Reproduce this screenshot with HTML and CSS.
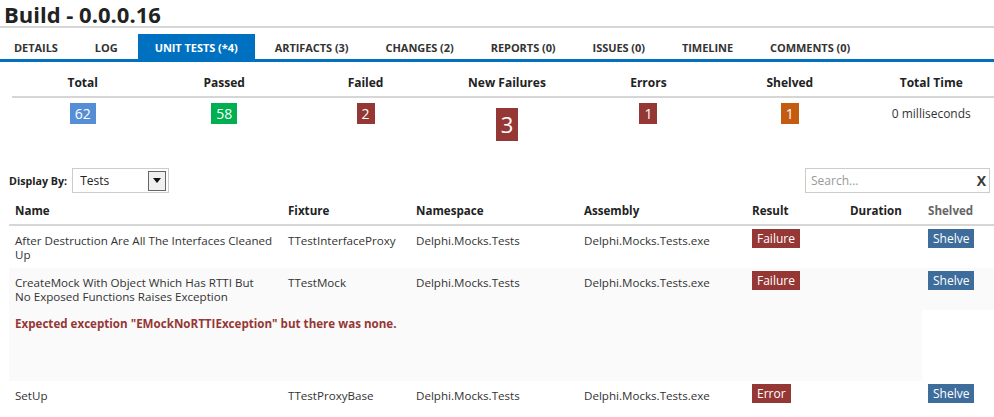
FILE: index.html
```html
<!DOCTYPE html>
<html lang="en">
<head>
    <meta charset="UTF-8">
    <title>Build - 0.0.0.16</title>
    <link rel="stylesheet" href="styles.css">
</head>
<body>
    <h1 class="build-title">Build - 0.0.0.16</h1>

    <ul class="tabs">
        <li>Details</li>
        <li>Log</li>
        <li class="active">Unit Tests (*4)</li>
        <li>Artifacts (3)</li>
        <li>Changes (2)</li>
        <li>Reports (0)</li>
        <li>Issues (0)</li>
        <li>Timeline</li>
        <li>Comments (0)</li>
    </ul>

    <table class="summary">
        <thead>
            <tr>
                <th>Total</th>
                <th>Passed</th>
                <th>Failed</th>
                <th>New Failures</th>
                <th>Errors</th>
                <th>Shelved</th>
                <th>Total Time</th>
            </tr>
        </thead>
        <tbody>
            <tr>
                <td><span class="count count-total">62</span></td>
                <td><span class="count count-passed">58</span></td>
                <td><span class="count count-failed">2</span></td>
                <td><span class="count count-new">3</span></td>
                <td><span class="count count-failed">1</span></td>
                <td><span class="count count-shelved">1</span></td>
                <td class="total-time">0 milliseconds</td>
            </tr>
        </tbody>
    </table>

    <div class="toolbar">
        <div class="display-by">
            <label>Display By:</label>
            <div class="select">
                <span>Tests</span>
                <span class="select-btn">
                    <svg width="8" height="5" viewBox="0 0 8 5"><path d="M0 0h8L4 5z" fill="#111"/></svg>
                </span>
            </div>
        </div>
        <div class="search">
            <span class="placeholder">Search...</span>
            <span class="clear">X</span>
        </div>
    </div>

    <table class="tests">
        <thead>
            <tr>
                <th class="col-name">Name</th>
                <th class="col-fixture">Fixture</th>
                <th class="col-ns">Namespace</th>
                <th class="col-asm">Assembly</th>
                <th class="col-result">Result</th>
                <th class="col-duration">Duration</th>
                <th class="col-shelved">Shelved</th>
            </tr>
        </thead>
        <tbody>
            <tr>
                <td>After Destruction Are All The Interfaces Cleaned Up</td>
                <td>TTestInterfaceProxy</td>
                <td>Delphi.Mocks.Tests</td>
                <td>Delphi.Mocks.Tests.exe</td>
                <td class="badge-cell"><span class="badge badge-failure">Failure</span></td>
                <td></td>
                <td class="badge-cell"><span class="badge badge-shelve">Shelve</span></td>
            </tr>
            <tr class="alt">
                <td>CreateMock With Object Which Has RTTI But<br>No Exposed Functions Raises Exception</td>
                <td>TTestMock</td>
                <td>Delphi.Mocks.Tests</td>
                <td>Delphi.Mocks.Tests.exe</td>
                <td class="badge-cell"><span class="badge badge-failure">Failure</span></td>
                <td></td>
                <td class="badge-cell"><span class="badge badge-shelve">Shelve</span></td>
            </tr>
            <tr class="message-row">
                <td colspan="6" class="message">Expected exception "EMockNoRTTIException" but there was none.</td>
                <td class="message-gap"></td>
            </tr>
            <tr>
                <td>SetUp</td>
                <td>TTestProxyBase</td>
                <td>Delphi.Mocks.Tests</td>
                <td>Delphi.Mocks.Tests.exe</td>
                <td class="badge-cell"><span class="badge badge-failure">Error</span></td>
                <td></td>
                <td class="badge-cell"><span class="badge badge-shelve">Shelve</span></td>
            </tr>
        </tbody>
    </table>
</body>
</html>
```

FILE: styles.css
```css
body {
    margin: 0;
    font-family: "Open Sans", "Noto Sans", Arial, sans-serif;
    font-size: 11.6px;
    color: #333;
    background-color: white;
    overflow: hidden;
}
.build-title {
    margin: 0;
    padding: 2px 0 0 4px;
    font-size: 22px;
    line-height: 24px;
    font-weight: bold;
    color: #222;
    border-bottom: 2px solid #d6d6d6;
}
.tabs {
    list-style: none;
    margin: 6px 0 0 0;
    padding: 0;
    display: flex;
    border-bottom: 3px solid #0070c0;
}
.tabs li {
    padding: 0 17px;
    margin-right: 3px;
    height: 25px;
    line-height: 27px;
    font-size: 11px;
    letter-spacing: -0.05px;
    font-weight: bold;
    text-transform: uppercase;
    color: #333;
}
.tabs li:first-child {
    padding-left: 14px;
}
.tabs li.active {
    background-color: #0070c0;
    color: white;
}

/* summary counts */
.summary {
    margin: 8px 0 0 12px;
    width: 990px;
    border-collapse: collapse;
    table-layout: fixed;
}
.summary th {
    font-size: 12px;
    font-weight: bold;
    color: #222;
    height: 24px;
    padding: 0 0 2px 0;
    border-bottom: 2px solid #d6d6d6;
}
.summary td {
    text-align: center;
    vertical-align: top;
    padding: 5px 0 0 0;
    height: 45px;
}
.count {
    display: inline-block;
    min-width: 7px;
    padding: 0 5px;
    height: 21px;
    line-height: 21px;
    font-size: 14px;
    color: white;
}
.count-total { background-color: #558ed5; }
.count-passed { background-color: #00b050; }
.count-failed { background-color: #953735; }
.count-shelved { background-color: #c55a11; }
.count-new {
    background-color: #953735;
    margin-top: 5px;
    height: 33px;
    line-height: 33px;
    font-size: 22px;
    padding: 0 5px;
}
.summary td.total-time {
    font-size: 12px;
    color: #333;
    line-height: 21px;
}

/* toolbar */
.toolbar {
    display: flex;
    justify-content: space-between;
    align-items: center;
    margin: 20px 4px 0 9px;
}
.display-by {
    display: flex;
    align-items: center;
}
.display-by label {
    font-size: 10.7px;
    font-weight: bold;
    color: #222;
    margin-right: 5px;
}
.select {
    box-sizing: border-box;
    width: 97px;
    height: 25px;
    border: 1px solid #ccc;
    display: flex;
    align-items: center;
    justify-content: space-between;
    padding: 0 2px 0 7px;
    font-size: 12px;
    color: #222;
}
.select-btn {
    box-sizing: border-box;
    width: 18px;
    height: 20px;
    border: 1px solid #666;
    background-color: #f0f0f0;
    display: flex;
    align-items: center;
    justify-content: center;
}
.search {
    box-sizing: border-box;
    width: 185px;
    height: 25px;
    border: 1px solid #ccc;
    display: flex;
    align-items: center;
    justify-content: space-between;
    padding: 0 3px 0 5px;
}
.search .placeholder {
    color: #999;
    font-size: 12px;
}
.search .clear {
    font-weight: bold;
    font-size: 14px;
    color: #3a3a3a;
}

/* tests table */
.tests {
    margin: 7px 0 0 9px;
    width: 1000px;
    border-collapse: collapse;
    table-layout: fixed;
}
.tests th {
    text-align: left;
    font-weight: bold;
    color: #222;
    padding: 2px 6px 5px 6px;
    height: 17px;
    border-bottom: 2px solid #d6d6d6;
}
.tests th.col-shelved { color: #666; }
.col-name { width: 261px; }
.col-fixture { width: 116px; }
.col-ns { width: 156px; }
.col-asm { width: 156px; }
.col-result { width: 86px; }
.col-duration { width: 66px; }
.tests td {
    vertical-align: top;
    padding: 8px 6px 6px 6px;
    line-height: 14px;
    color: #333;
}
.tests td.badge-cell {
    padding-top: 3px;
}
.tests tr.alt td,
.tests td.message {
    background-color: #fafafa;
}
.tests td.message {
    font-weight: bold;
    color: #953735;
    height: 58px;
    padding-top: 7px;
}
.tests td.message-gap {
    background-color: white;
}
.badge {
    display: inline-block;
    height: 19px;
    line-height: 19px;
    padding: 0 5px;
    font-size: 12px;
    color: white;
}
.badge-failure { background-color: #953735; }
.badge-shelve { background-color: #3e6d9c; }
```
